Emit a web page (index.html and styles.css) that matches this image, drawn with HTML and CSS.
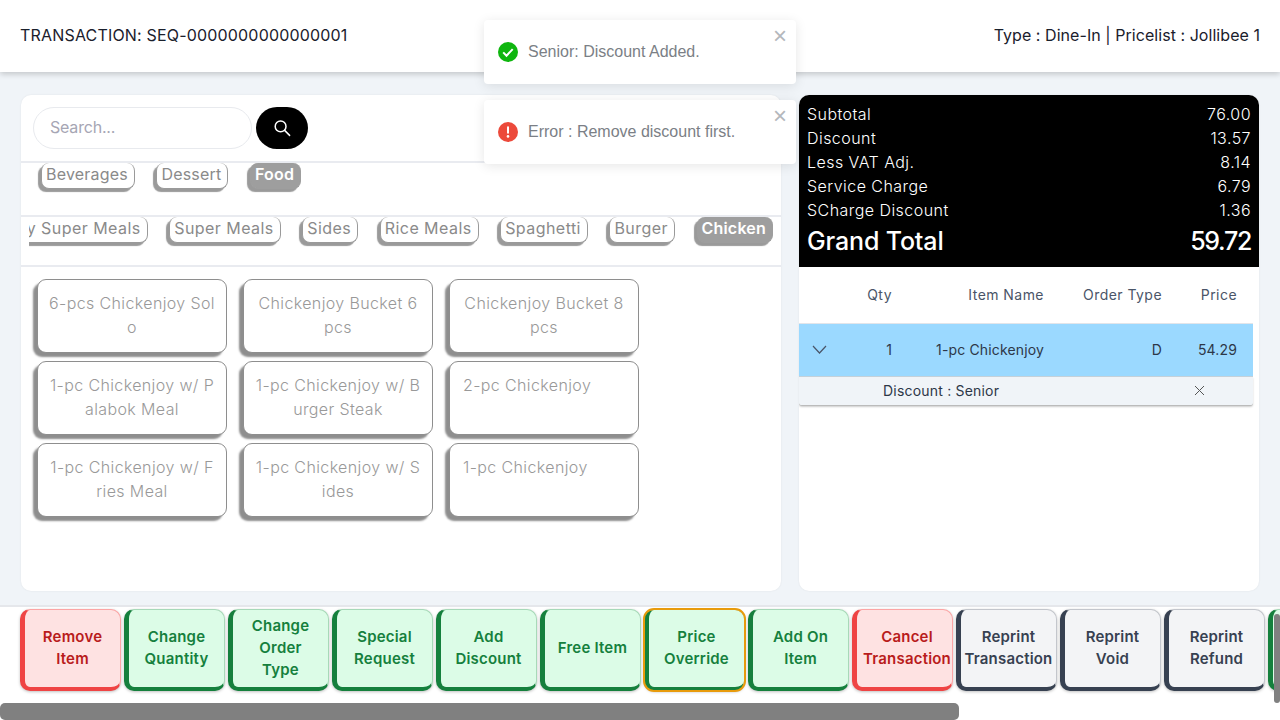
FILE: index.html
```html
<!DOCTYPE html>
<html lang="en">
<head>
<meta charset="utf-8">
<title>POS</title>
<link rel="stylesheet" href="styles.css">
</head>
<body>
<header class="top">
  <div class="top-left">TRANSACTION: SEQ-0000000000000001</div>
  <div class="top-right">Type : Dine-In | Pricelist : Jollibee 1</div>
</header>
<main class="main">
  <section class="menu card">
    <div class="search-row">
      <div class="search-input">Search...</div>
      <button class="search-btn" aria-label="Search">
        <svg width="18" height="18" viewBox="0 0 18 18" fill="none" stroke="#fff" stroke-width="1.5" stroke-linecap="round"><circle cx="7.6" cy="7.4" r="5.4"/><path d="M11.6 11.4l5 5"/></svg>
      </button>
    </div>
    <div class="chip-row chip-row-one">
      <span class="chip">Beverages</span>
      <span class="chip">Dessert</span>
      <span class="chip chip-on">Food</span>
    </div>
    <div class="chip-row chip-row-two">
      <span class="chip">Family Super Meals</span>
      <span class="chip">Super Meals</span>
      <span class="chip">Sides</span>
      <span class="chip">Rice Meals</span>
      <span class="chip">Spaghetti</span>
      <span class="chip">Burger</span>
      <span class="chip chip-on">Chicken</span>
    </div>
    <div class="products">
      <div class="product">6-pcs Chickenjoy Solo</div>
      <div class="product">Chickenjoy Bucket 6 pcs</div>
      <div class="product">Chickenjoy Bucket 8 pcs</div>
      <div class="product">1-pc Chickenjoy w/ Palabok Meal</div>
      <div class="product">1-pc Chickenjoy w/ Burger Steak</div>
      <div class="product product-short">2-pc Chickenjoy</div>
      <div class="product">1-pc Chickenjoy w/ Fries Meal</div>
      <div class="product">1-pc Chickenjoy w/ Sides</div>
      <div class="product product-short">1-pc Chickenjoy</div>
    </div>
  </section>
  <section class="order card">
    <div class="summary">
      <div class="sum-row"><span>Subtotal</span><span>76.00</span></div>
      <div class="sum-row"><span>Discount</span><span>13.57</span></div>
      <div class="sum-row"><span>Less VAT Adj.</span><span>8.14</span></div>
      <div class="sum-row"><span>Service Charge</span><span>6.79</span></div>
      <div class="sum-row"><span>SCharge Discount</span><span>1.36</span></div>
      <div class="sum-row grand"><span>Grand Total</span><span class="grand-num">59.72</span></div>
    </div>
    <div class="lines">
      <div class="line line-head"><span></span><span>Qty</span><span>Item Name</span><span>Order Type</span><span>Price</span></div>
      <div class="line line-item">
        <span class="chev"><svg width="15" height="9" viewBox="0 0 15 9" fill="none" stroke="#4a5568" stroke-width="1.2"><path d="M1 1l6.5 7L14 1"/></svg></span>
        <span>1</span><span>1-pc Chickenjoy</span><span>D</span><span>54.29</span>
      </div>
      <div class="line-sub">
        <span class="sub-text">Discount : Senior</span>
        <svg class="sub-x" width="11" height="11" viewBox="0 0 11 11" fill="none" stroke="#555" stroke-width="1"><path d="M1 1l9 9M10 1l-9 9"/></svg>
      </div>
    </div>
  </section>
</main>
<footer class="actions">
  <div class="actions-track">
    <button class="act red">Remove<br>Item</button>
    <button class="act green">Change<br>Quantity</button>
    <button class="act green">Change<br>Order<br>Type</button>
    <button class="act green">Special<br>Request</button>
    <button class="act green">Add<br>Discount</button>
    <button class="act green">Free Item</button>
    <button class="act green focus">Price<br>Override</button>
    <button class="act green">Add On<br>Item</button>
    <button class="act red act-wide">Cancel<br>Transaction</button>
    <button class="act gray">Reprint<br>Transaction</button>
    <button class="act gray">Reprint<br>Void</button>
    <button class="act gray">Reprint<br>Refund</button>
    <button class="act green" aria-label="More"></button>
  </div>
</footer>
<div class="hthumb"></div>
<div class="vthumb"></div>
<div class="toasts">
  <div class="toast">
    <svg width="20" height="20" viewBox="0 0 20 20"><circle cx="10" cy="10" r="10" fill="#0fb60f"/><path d="M5.2 10.4l3.3 3.3 6.2-6.6" fill="none" stroke="#fff" stroke-width="2"/></svg>
    <span>Senior: Discount Added.</span>
    <span class="toast-x">&#215;</span>
  </div>
  <div class="toast">
    <svg width="20" height="20" viewBox="0 0 20 20"><circle cx="10" cy="10" r="10" fill="#ec4a3b"/><rect x="9" y="4.2" width="2" height="7.6" rx="1" fill="#fff"/><circle cx="10" cy="14.4" r="1.3" fill="#fff"/></svg>
    <span>Error : Remove discount first.</span>
    <span class="toast-x">&#215;</span>
  </div>
</div>
</body>
</html>
```
FILE: styles.css
```css
* { box-sizing: border-box; }
html, body { margin: 0; height: 100%; overflow: hidden; }
body {
  width: 1280px; height: 720px;
  display: flex; flex-direction: column;
  background: #f0f4f8;
  font-family: Inter, "Liberation Sans", sans-serif;
  letter-spacing: .45px;
  color: #1a202c;
}
.top {
  height: 72px; flex: none;
  display: flex; justify-content: space-between; align-items: flex-start;
  padding: 25px 20px 0;
  background: #fff;
  box-shadow: 0 2px 6px rgba(0,0,0,.2);
  font-size: 16px; line-height: 20px;
  position: relative;
}
.top-left { letter-spacing: .18px; }
.top-right { letter-spacing: .05px; }
.main {
  flex: none; height: 533px;
  display: flex; gap: 18px;
  padding: 23px 21px 14px;
}
.card { background: #fff; border-radius: 10px; box-shadow: 0 0 2px rgba(0,0,0,.08); overflow: hidden; }
.menu { width: 760px; display: flex; flex-direction: column; }
.search-row { height: 68px; flex: none; display: flex; gap: 4px; padding: 12px; border-bottom: 2px solid #e9ebf0; }
.search-input {
  width: 219px; height: 42px;
  border: 1px solid #e8eaee; border-radius: 21px;
  padding: 0 16px; line-height: 39px;
  font-size: 16px; color: #a6a6b4; letter-spacing: -.2px;
}
.search-btn { width: 52px; height: 42px; border: 0; border-radius: 21px; background: #000; padding: 0; display: flex; align-items: center; justify-content: center; }
.chip-row { flex: none; display: flex; overflow: hidden; gap: 18.5px; }
.chip-row-one { height: 54px; padding: 0 17px; border-bottom: 2px solid #e9ebf0; letter-spacing: .2px; }
.chip-row-two { height: 48px; margin: 0 8px; justify-content: flex-end; }
.chip {
  flex: none; height: 26px;
  padding: 0 6px 0 4px; margin-left: 3px;
  border: 1px solid #9a9a9a; border-top: 0;
  border-radius: 8px;
  box-shadow: -3px 3px 1px #9a9a9a;
  font-size: 16px; line-height: 23px; color: #8a8a8a;
  background: #fff;
}
.chip-on { background: #9e9e9e; color: #fff; font-weight: 600; border-color: #9e9e9e; letter-spacing: .2px; }
.products {
  flex: 1; border-top: 2px solid #e9ebf0;
  display: grid; grid-template-columns: repeat(3, 190px); grid-auto-rows: 74px;
  gap: 8px 16px; padding: 12px 16px;
  align-content: start;
}
.product {
  border: 1px solid #8e8e8e; border-radius: 9px;
  box-shadow: -4px 4px 2px #8e8e8e;
  background: #fff;
  padding: 11px 10px;
  font-size: 16px; line-height: 24px; font-weight: 300; color: #999;
  letter-spacing: .38px;
  text-align: center; word-break: break-all;
}
.product-short { text-align: left; padding-left: 13px; }
.order { width: 460px; display: flex; flex-direction: column; }
.summary { height: 172px; flex: none; background: #000; color: #fff; padding: 7px 8px 0; }
.sum-row { display: flex; justify-content: space-between; font-size: 16px; line-height: 24px; font-weight: 300; }
.grand { font-size: 25px; line-height: 38px; font-weight: 500; letter-spacing: -.15px; }
.grand-num { letter-spacing: -1.3px; }
.lines { width: 454px; }
.line { display: grid; grid-template-columns: 40px 53px 152px 118px 75px; padding-right: 16px; font-size: 14px; text-align: right; color: #2d3748; font-weight: 400; letter-spacing: .15px; }
.line-head { height: 57px; line-height: 56px; border-bottom: 1px solid #e2e5ea; color: #4a5568; letter-spacing: .45px; }
.line-item { height: 53px; line-height: 52px; background: #9bd9ff; border-bottom: 1px solid #c6d3dc; }
.chev { text-align: left; padding-left: 13px; line-height: 0; padding-top: 21px; }
.line-sub {
  height: 29px; display: flex; align-items: center;
  padding: 0 0 2px 84px;
  background: #f0f4f8; border-bottom: 1px solid #bbb;
  box-shadow: 0 1px 2px rgba(0,0,0,.2);
  border-radius: 0 0 3px 3px;
  font-size: 14px; color: #2d3748; letter-spacing: .2px;
}
.sub-text { flex: none; width: 311px; }
.sub-x { flex: none; }
.actions {
  flex: 1; min-height: 0;
  background: #fff; border-top: 2px solid #e5e7eb;
  overflow: hidden;
}
.actions-track { display: flex; gap: 3px; padding: 2px 0 0 20px; }
.act {
  flex: none; width: 101px; height: 82px;
  border: 1px solid; border-left-width: 5px; border-bottom-width: 4px;
  border-radius: 10px;
  box-shadow: 0 1px 3px rgba(0,0,0,.25);
  padding: 0 0 2px;
  font: 600 15px/22px Inter, "Liberation Sans", sans-serif;
  letter-spacing: .2px;
}
.act-wide { padding-left: 5px; }
.red { background: #fee2e2; color: #b91c1c; border-color: #fca5a5 #fca5a5 #ef4444 #ef4444; }
.green { background: #dcfce7; color: #15803d; border-color: #a7d9b8 #a7d9b8 #15803d #15803d; }
.gray { background: #f3f4f6; color: #374151; border-color: #c3c6cc #c3c6cc #374151 #374151; }
.focus { outline: 2px solid #e89b0c; outline-offset: -1px; }
.hthumb { position: absolute; left: 0; top: 703px; width: 959px; height: 17px; background: #808080; border-radius: 5px; }
.vthumb { position: absolute; left: 1274px; top: 614px; width: 6px; height: 89px; background: #808080; border-radius: 3px; }
.toasts { position: absolute; left: 484px; top: 20px; display: flex; flex-direction: column; gap: 16px; }
.toast {
  width: 312px; height: 64px; position: relative;
  display: flex; align-items: center; gap: 10px; padding: 0 14px;
  background: #fff; border-radius: 4px;
  box-shadow: 0 2px 12px rgba(0,0,0,.1);
  font: 16px/20px "Liberation Sans", sans-serif; letter-spacing: 0; color: #7b7f86;
}
.toast svg { flex: none; }
.toast-x { position: absolute; right: 9px; top: 6px; font-size: 24px; line-height: 20px; color: #b4b7bc; }
```
